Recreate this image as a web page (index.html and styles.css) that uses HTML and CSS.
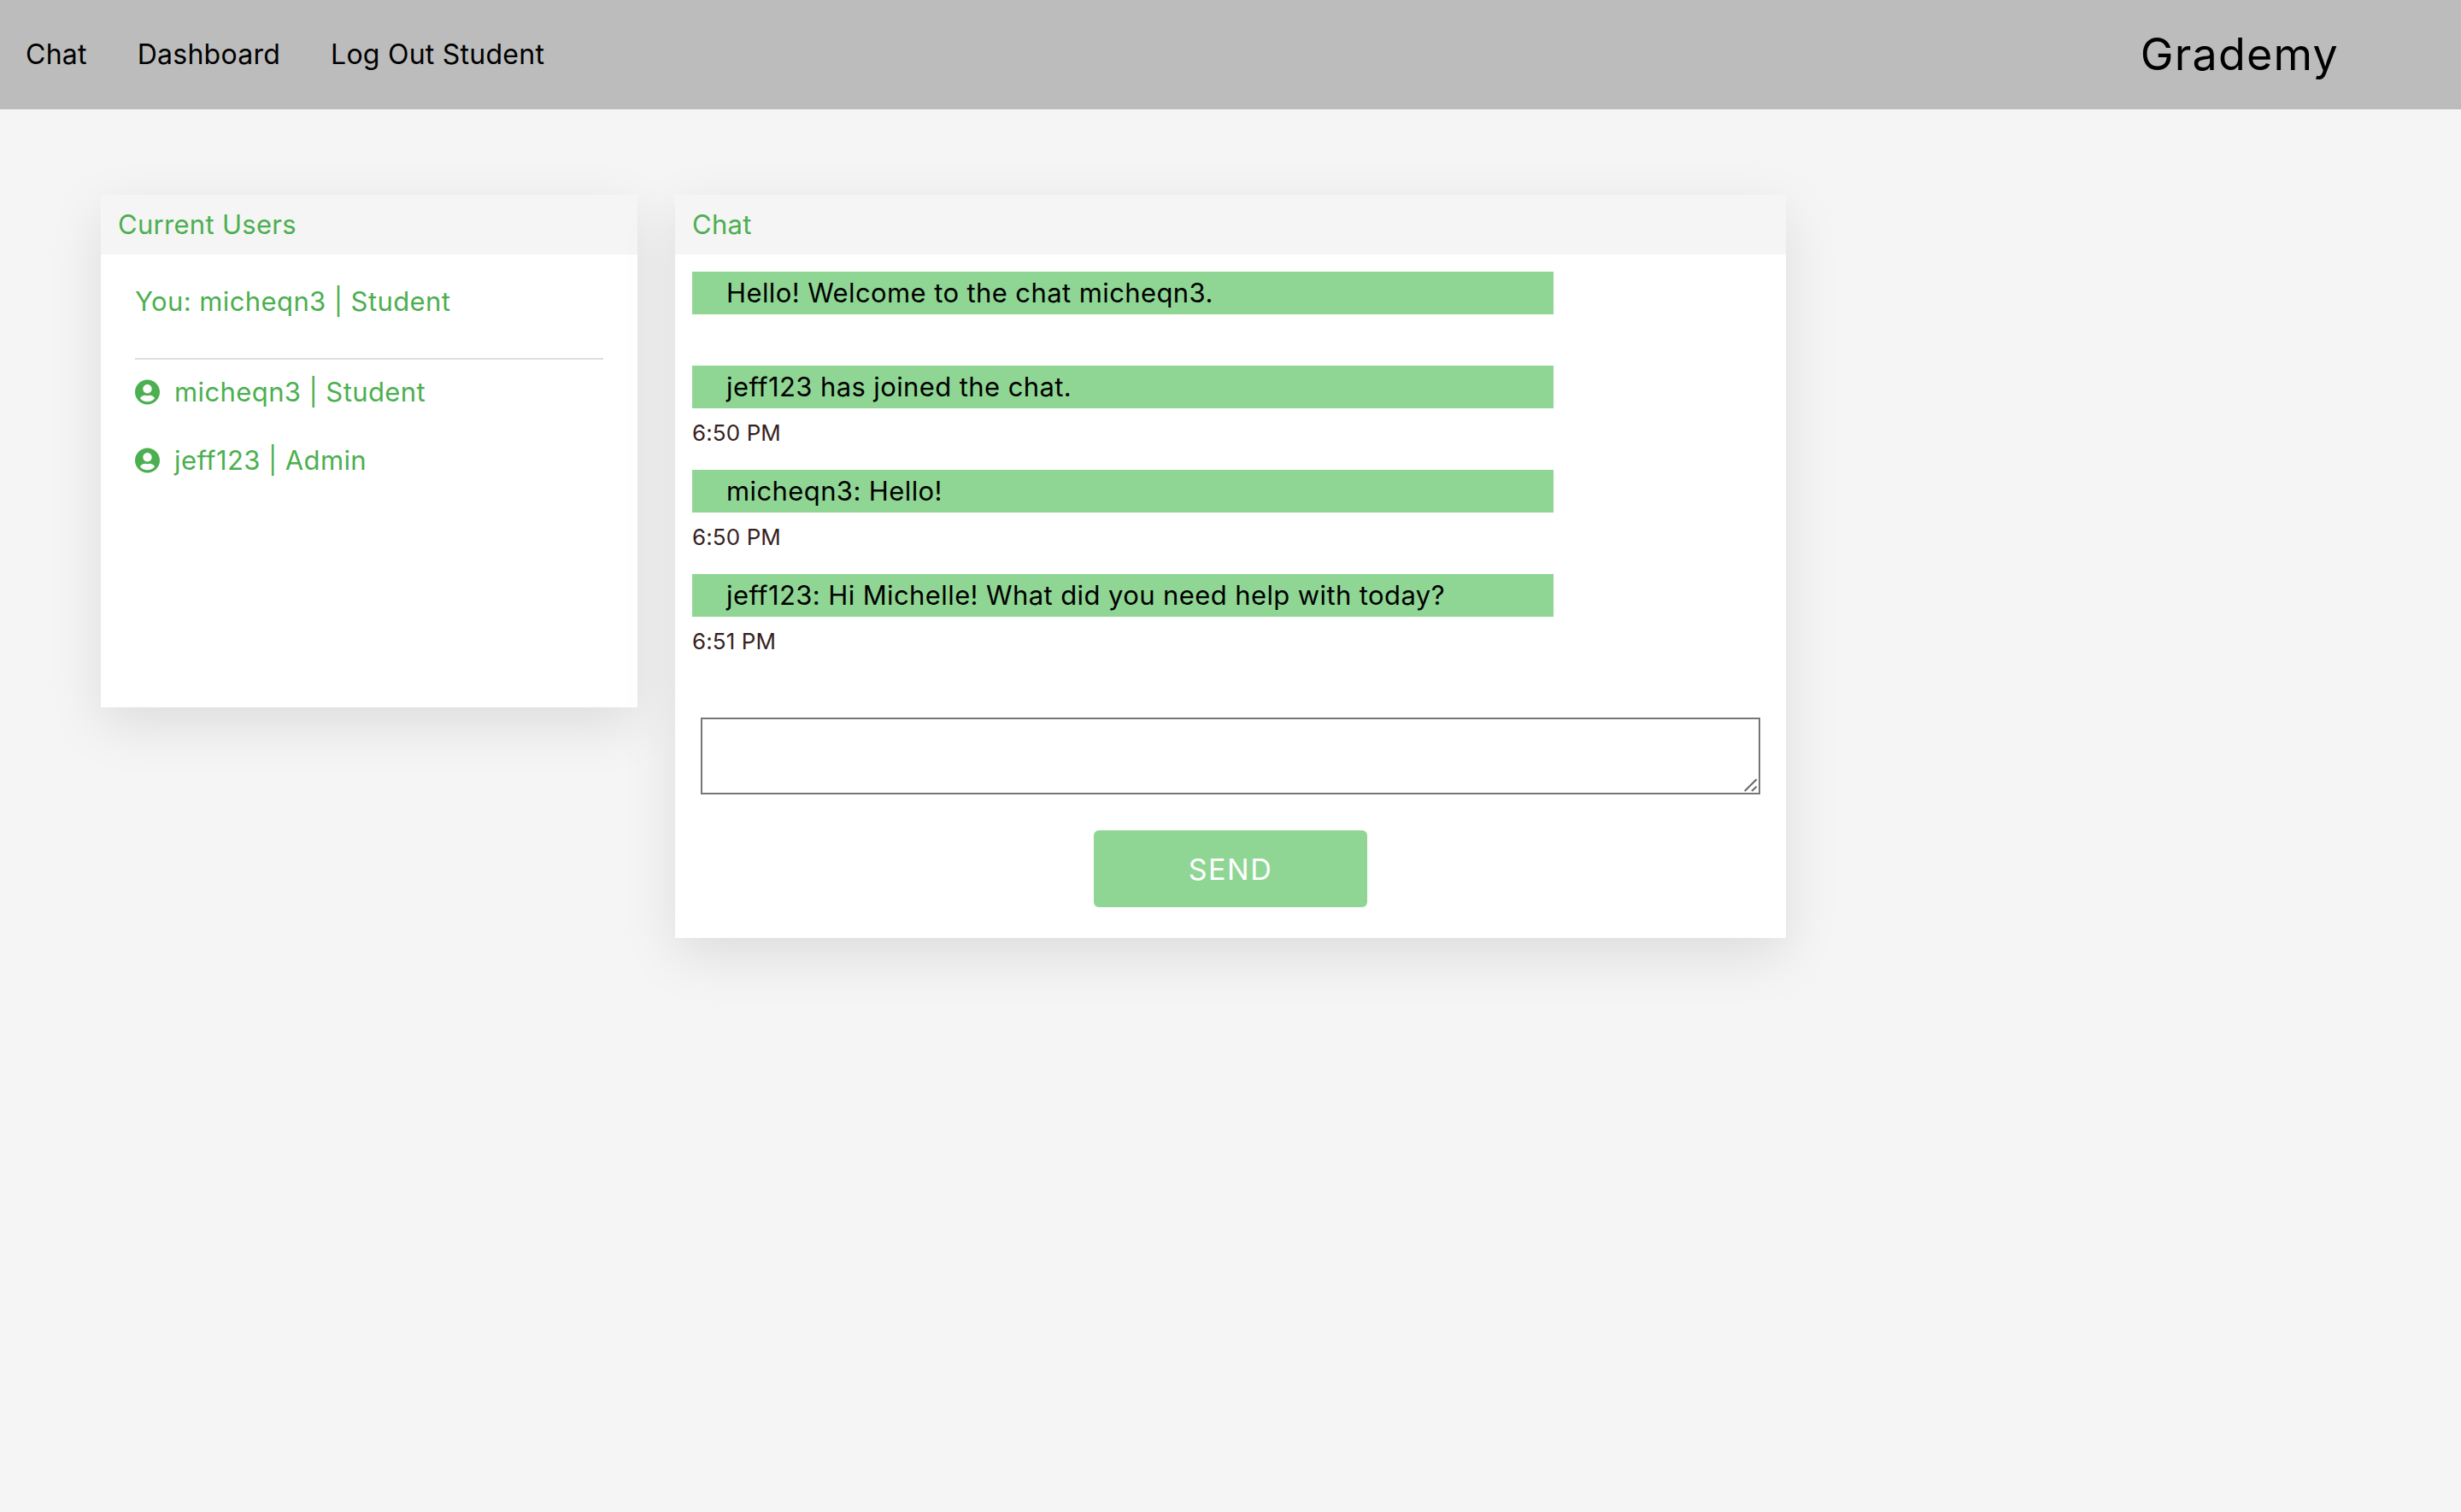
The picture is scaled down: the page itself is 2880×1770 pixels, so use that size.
FILE: index.html
```html
<!DOCTYPE html>
<html lang="en">
<head>
<meta charset="utf-8">
<title>Grademy Chat</title>
<link rel="stylesheet" href="styles.css">
</head>
<body>
<header class="topbar">
  <nav class="nav">
    <a class="nav-link" href="#">Chat</a>
    <a class="nav-link" href="#">Dashboard</a>
    <a class="nav-link" href="#">Log Out Student</a>
  </nav>
  <div class="brand">Grademy</div>
</header>
<main class="main">
  <section class="card card-users">
    <h2 class="card-title">Current Users</h2>
    <div class="users-body">
      <p class="you">You: micheqn3 | Student</p>
      <hr class="divider">
      <ul class="user-list">
        <li class="user">
          <svg class="user-icon" viewBox="0 0 496 512" aria-hidden="true"><path d="M248 8C111 8 0 119 0 256s111 248 248 248 248-111 248-248S385 8 248 8zm0 96c48.6 0 88 39.4 88 88s-39.4 88-88 88-88-39.4-88-88 39.4-88 88-88zm0 344c-58.7 0-111.3-26.6-146.5-68.2 18.8-35.4 55.6-59.8 98.5-59.8 2.4 0 4.8.4 7.1 1.1 13 4.2 26.6 6.9 40.9 6.9 14.3 0 28-2.7 40.9-6.9 2.3-.7 4.7-1.1 7.1-1.1 42.9 0 79.7 24.4 98.5 59.8C359.3 421.4 306.7 448 248 448z"/></svg>
          <span>micheqn3 | Student</span>
        </li>
        <li class="user">
          <svg class="user-icon" viewBox="0 0 496 512" aria-hidden="true"><path d="M248 8C111 8 0 119 0 256s111 248 248 248 248-111 248-248S385 8 248 8zm0 96c48.6 0 88 39.4 88 88s-39.4 88-88 88-88-39.4-88-88 39.4-88 88-88zm0 344c-58.7 0-111.3-26.6-146.5-68.2 18.8-35.4 55.6-59.8 98.5-59.8 2.4 0 4.8.4 7.1 1.1 13 4.2 26.6 6.9 40.9 6.9 14.3 0 28-2.7 40.9-6.9 2.3-.7 4.7-1.1 7.1-1.1 42.9 0 79.7 24.4 98.5 59.8C359.3 421.4 306.7 448 248 448z"/></svg>
          <span>jeff123 | Admin</span>
        </li>
      </ul>
    </div>
  </section>
  <section class="card card-chat">
    <h2 class="card-title">Chat</h2>
    <div class="chat-body">
      <div class="messages">
        <div class="message message-first"><p class="bubble">Hello! Welcome to the chat micheqn3.</p></div>
        <div class="message"><p class="bubble">jeff123 has joined the chat.</p><time class="stamp">6:50 PM</time></div>
        <div class="message"><p class="bubble">micheqn3: Hello!</p><time class="stamp">6:50 PM</time></div>
        <div class="message"><p class="bubble">jeff123: Hi Michelle! What did you need help with today?</p><time class="stamp">6:51 PM</time></div>
      </div>
      <form class="composer">
        <div class="input-wrap">
          <textarea class="input"></textarea>
          <svg class="grip" viewBox="0 0 20 20" aria-hidden="true"><path d="M3.7 18L17.7 4.3M12 18L17.7 12.7"/></svg>
        </div>
        <button class="send" type="button">SEND</button>
      </form>
    </div>
  </section>
</main>
</body>
</html>
```
FILE: styles.css
```css
* { box-sizing: border-box; }
html, body { margin: 0; padding: 0; }
body {
  min-height: 1770px;
  background: #f5f5f5;
  color: #000;
  font-family: "Inter", "Liberation Sans", sans-serif;
}
.topbar {
  height: 128px;
  background: #bcbcbc;
  display: flex;
  align-items: center;
  justify-content: space-between;
  padding: 0 143px 0 30px;
}
.nav { display: flex; gap: 59px; }
.nav-link {
  color: #000;
  text-decoration: none;
  font-size: 32px;
  line-height: 40px;
  letter-spacing: 0.25px;
}
.brand {
  font-size: 52px;
  line-height: 70px;
  letter-spacing: 1.2px;
}
.main {
  display: flex;
  align-items: flex-start;
  gap: 44px;
  padding: 100px 118px;
}
.card {
  background: #fff;
  box-shadow: 0 20px 60px rgba(0, 0, 0, 0.1);
}
.card-users { width: 628px; height: 600px; }
.card-chat { width: 1300px; height: 870px; }
.card-title {
  margin: 0;
  height: 70px;
  padding-left: 20px;
  background: #f5f5f5;
  color: #4caf50;
  font-size: 31px;
  font-weight: 400;
  line-height: 70px;
  letter-spacing: 0.3px;
}
.users-body { padding: 35px 40px 0; color: #4caf50; font-size: 31px; letter-spacing: 0.4px; }
.you { margin: 0 0 46px; line-height: 40px; }
.divider { margin: 0 0 18px; height: 2px; border: 0; background: #ddd; }
.user-list { list-style: none; margin: 0; padding: 0; display: flex; flex-direction: column; gap: 40px; }
.user { display: flex; align-items: center; gap: 17px; height: 40px; line-height: 40px; }
.user-icon { width: 29px; height: 30px; fill: #4caf50; flex: none; }
.chat-body { padding: 20px 20px 0; }
.message { margin-bottom: 72px; height: 50px; }
.message-first { margin-bottom: 60px; }
.bubble {
  margin: 0;
  width: 1008px;
  height: 50px;
  padding-left: 40px;
  background: #8fd694;
  font-size: 31px;
  line-height: 50px;
  letter-spacing: 0.4px;
}
.stamp {
  display: block;
  margin-top: 9px;
  color: #362222;
  font-size: 26px;
  line-height: 40px;
  letter-spacing: 0.1px;
}
.composer {
  display: flex;
  flex-direction: column;
  align-items: center;
  padding: 46px 10px 0;
}
.input-wrap { position: relative; width: 1240px; height: 90px; }
.input {
  display: block;
  width: 100%;
  height: 100%;
  margin: 0;
  border: 2px solid #767676;
  background: #fff;
  resize: none;
}
.grip {
  position: absolute;
  right: 2px;
  bottom: 2px;
  width: 20px;
  height: 20px;
  fill: none;
  stroke: #666;
  stroke-width: 2;
}
.send {
  width: 320px;
  height: 90px;
  margin-top: 42px;
  border: 0;
  border-radius: 6px;
  background: #8fd694;
  color: #fff;
  font-family: inherit;
  font-size: 34px;
  letter-spacing: 1.5px;
}
```
